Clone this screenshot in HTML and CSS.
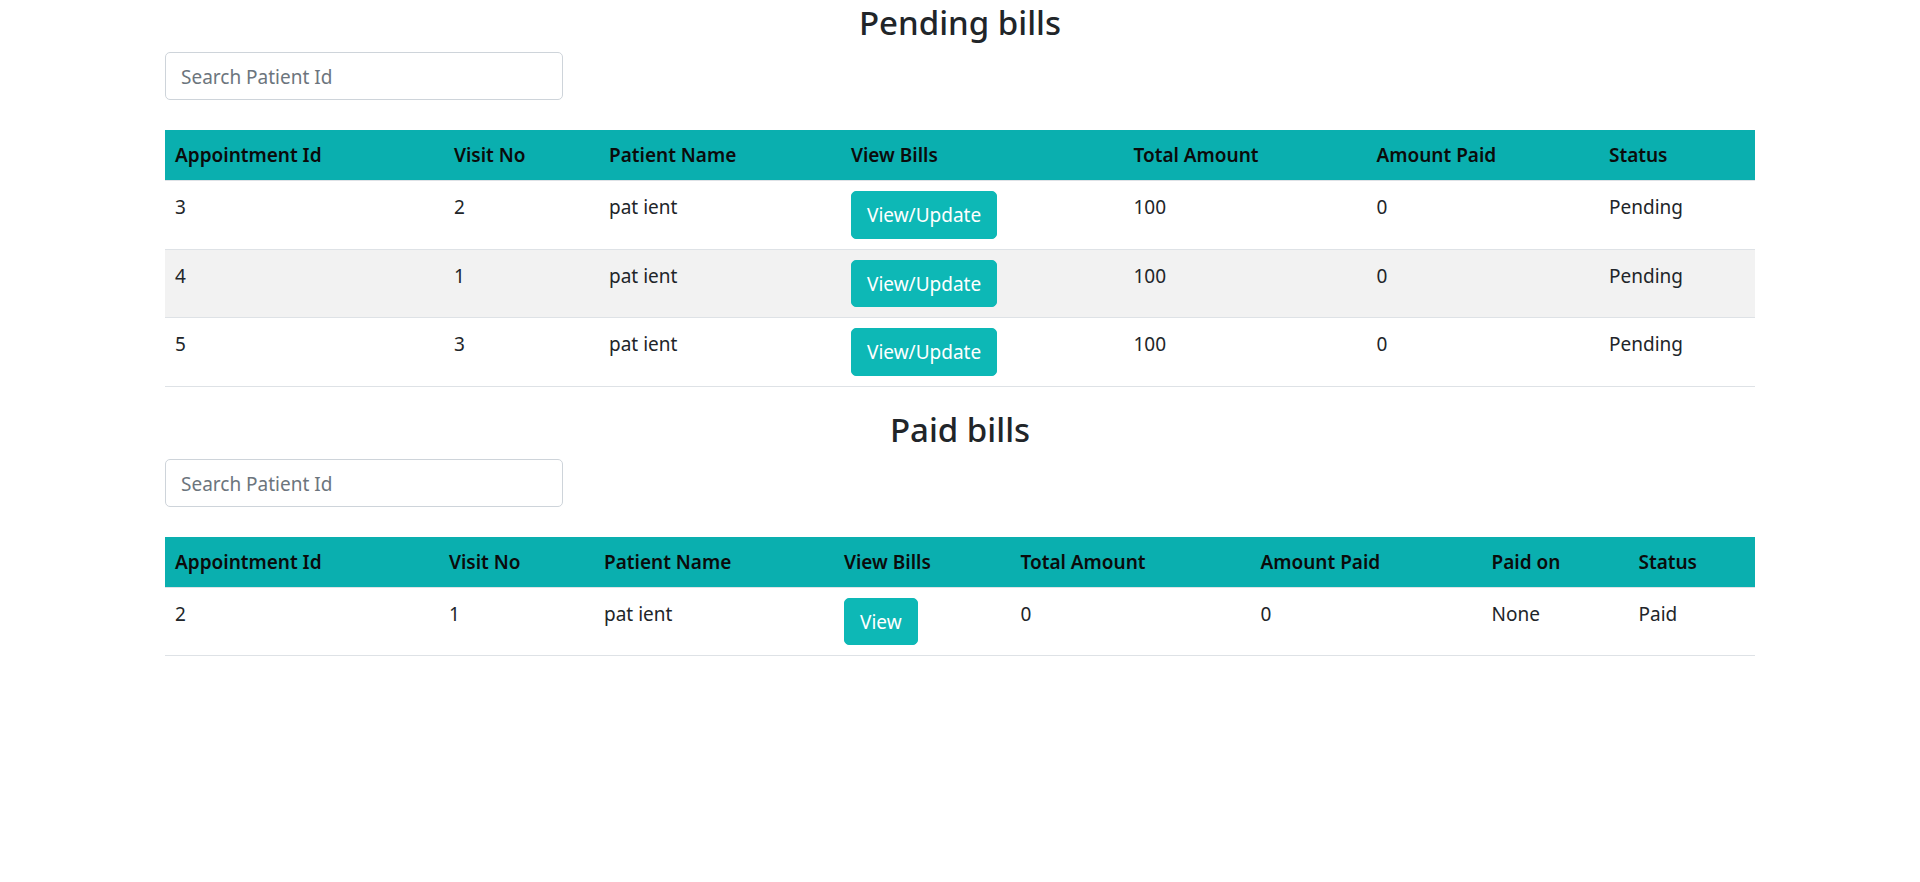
FILE: index.html
```html
<!DOCTYPE html>
<html lang="en">
<head>
<meta charset="utf-8">
<title>Bills</title>
<link rel="stylesheet" href="styles.css">
</head>
<body>
<main class="page">
  <section class="bills">
    <h3 class="bills-title">Pending bills</h3>
    <input class="search" type="text" placeholder="Search Patient Id">
    <table class="bill-table pending">
      <thead>
        <tr>
          <th>Appointment Id</th>
          <th>Visit No</th>
          <th>Patient Name</th>
          <th>View Bills</th>
          <th>Total Amount</th>
          <th>Amount Paid</th>
          <th>Status</th>
        </tr>
      </thead>
      <tbody>
        <tr>
          <td>3</td><td>2</td><td>pat ient</td>
          <td><button class="btn-teal">View/Update</button></td>
          <td>100</td><td>0</td><td>Pending</td>
        </tr>
        <tr>
          <td>4</td><td>1</td><td>pat ient</td>
          <td><button class="btn-teal">View/Update</button></td>
          <td>100</td><td>0</td><td>Pending</td>
        </tr>
        <tr>
          <td>5</td><td>3</td><td>pat ient</td>
          <td><button class="btn-teal">View/Update</button></td>
          <td>100</td><td>0</td><td>Pending</td>
        </tr>
      </tbody>
    </table>
  </section>
  <section class="bills">
    <h3 class="bills-title">Paid bills</h3>
    <input class="search" type="text" placeholder="Search Patient Id">
    <table class="bill-table paid">
      <thead>
        <tr>
          <th>Appointment Id</th>
          <th>Visit No</th>
          <th>Patient Name</th>
          <th>View Bills</th>
          <th>Total Amount</th>
          <th>Amount Paid</th>
          <th>Paid on</th>
          <th>Status</th>
        </tr>
      </thead>
      <tbody>
        <tr>
          <td>2</td><td>1</td><td>pat ient</td>
          <td><button class="btn-teal">View</button></td>
          <td>0</td><td>0</td><td>None</td><td>Paid</td>
        </tr>
      </tbody>
    </table>
  </section>
</main>
</body>
</html>
```

FILE: styles.css
```css
* { box-sizing: border-box; }

html, body {
  margin: 0;
  padding: 0;
  background: #ffffff;
}

body {
  font-family: "Noto Sans", "Open Sans", sans-serif;
  font-size: 19px;
  line-height: 30px;
  color: #212529;
}

.page {
  width: 1590px;
  margin: 0 auto;
}

.bills {
  display: flex;
  flex-direction: column;
  align-items: flex-start;
}

.bills-title {
  align-self: stretch;
  margin: 0 0 10px;
  padding-top: 2px;
  height: 42px;
  text-align: center;
  font-size: 33px;
  line-height: 42px;
  font-weight: 500;
  color: #212529;
}

.search {
  width: 398px;
  height: 48px;
  margin: 0 0 30px;
  padding: 2px 15px 0;
  font-family: inherit;
  font-size: 19px;
  color: #495057;
  background: #fff;
  border: 1px solid #ced4da;
  border-radius: 5px;
  outline: none;
}

.search::placeholder {
  color: #6c757d;
}

.bill-table {
  width: 1590px;
  table-layout: fixed;
  border-collapse: collapse;
  margin: 0 0 20px;
  border-bottom: 1px solid #dee2e6;
}

.bill-table th {
  background: #0aafaf;
  color: #0b0b0b;
  font-weight: 600;
  text-align: left;
  padding: 10px;
  height: 50px;
  vertical-align: middle;
}

.bill-table td {
  padding: 11px 10px 9px;
  vertical-align: top;
  border-top: 1px solid #dee2e6;
  text-align: left;
}

.bill-table tbody tr:nth-child(even) td {
  background: #f2f2f2;
}

.pending th:nth-child(1) { width: 279px; }
.pending th:nth-child(2) { width: 155px; }
.pending th:nth-child(3) { width: 242px; }
.pending th:nth-child(4) { width: 282.5px; }
.pending th:nth-child(5) { width: 243px; }
.pending th:nth-child(6) { width: 232.5px; }
.pending th:nth-child(7) { width: 156px; }

.paid th:nth-child(1) { width: 274px; }
.paid th:nth-child(2) { width: 155px; }
.paid th:nth-child(3) { width: 240px; }
.paid th:nth-child(4) { width: 176.5px; }
.paid th:nth-child(5) { width: 240px; }
.paid th:nth-child(6) { width: 231px; }
.paid th:nth-child(7) { width: 147px; }
.paid th:nth-child(8) { width: 126.5px; }

.btn-teal {
  display: inline-block;
  height: 47.5px;
  margin: -1px 0 1px;
  padding: 1px 15px 0;
  font-family: inherit;
  font-size: 19px;
  line-height: 30px;
  color: #fff;
  background: #0db8b6;
  border: 1px solid #0db8b6;
  border-radius: 5px;
  cursor: pointer;
  vertical-align: top;
}
```
